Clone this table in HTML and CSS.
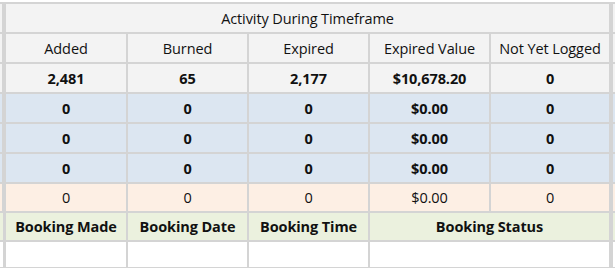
FILE: index.html
```html
<!DOCTYPE html>
<html>
<head>
<meta charset="utf-8">
<link rel="stylesheet" href="styles.css">
</head>
<body>
<div class="sheet">
  <div class="row gray">
    <div class="edge-l"></div>
    <div class="cell span5">Activity During Timeframe</div>
    <div class="edge-r"></div>
  </div>
  <div class="row gray">
    <div class="edge-l"></div>
    <div class="cell">Added</div>
    <div class="cell">Burned</div>
    <div class="cell">Expired</div>
    <div class="cell">Expired Value</div>
    <div class="cell">Not Yet Logged</div>
    <div class="edge-r"></div>
  </div>
  <div class="row gray bold">
    <div class="edge-l"></div>
    <div class="cell">2,481</div>
    <div class="cell">65</div>
    <div class="cell">2,177</div>
    <div class="cell">$10,678.20</div>
    <div class="cell">0</div>
    <div class="edge-r"></div>
  </div>
  <div class="row blue bold">
    <div class="edge-l"></div>
    <div class="cell">0</div>
    <div class="cell">0</div>
    <div class="cell">0</div>
    <div class="cell">$0.00</div>
    <div class="cell">0</div>
    <div class="edge-r"></div>
  </div>
  <div class="row blue bold">
    <div class="edge-l"></div>
    <div class="cell">0</div>
    <div class="cell">0</div>
    <div class="cell">0</div>
    <div class="cell">$0.00</div>
    <div class="cell">0</div>
    <div class="edge-r"></div>
  </div>
  <div class="row blue bold">
    <div class="edge-l"></div>
    <div class="cell">0</div>
    <div class="cell">0</div>
    <div class="cell">0</div>
    <div class="cell">$0.00</div>
    <div class="cell">0</div>
    <div class="edge-r"></div>
  </div>
  <div class="row peach">
    <div class="edge-l"></div>
    <div class="cell">0</div>
    <div class="cell">0</div>
    <div class="cell">0</div>
    <div class="cell">$0.00</div>
    <div class="cell">0</div>
    <div class="edge-r"></div>
  </div>
  <div class="row green bold thin-left">
    <div class="edge-l"></div>
    <div class="cell">Booking Made</div>
    <div class="cell">Booking Date</div>
    <div class="cell">Booking Time</div>
    <div class="cell span2">Booking Status</div>
    <div class="edge-r"></div>
  </div>
  <div class="row white thin-left">
    <div class="edge-l"></div>
    <div class="cell"></div>
    <div class="cell"></div>
    <div class="cell"></div>
    <div class="cell span2"></div>
    <div class="edge-r"></div>
  </div>
</div>
</body>
</html>
```

FILE: styles.css
```css
html, body {
  margin: 0;
  padding: 0;
  background: #ffffff;
}

body {
  font-family: "Open Sans", "Liberation Sans", sans-serif;
  font-size: 14.5px;
  color: #111111;
}

.sheet {
  margin-top: 2px;
  padding-top: 2px;
  padding-bottom: 1px;
  background: #d4d4d4;
  display: grid;
  grid-template-columns: 4px 120px 119px 119px 119px 118px 4px;
  column-gap: 2px;
  row-gap: 2px;
}

.row {
  display: contents;
}

.cell {
  height: 28px;
  display: flex;
  align-items: center;
  justify-content: center;
  white-space: nowrap;
  letter-spacing: -0.1px;
}

.edge-l {
  margin-right: 2px;
}

.edge-r {
  margin-left: 2px;
}

.span5 { grid-column: span 5; }
.span2 { grid-column: span 2; }

.bold { font-weight: 700; }

.gray .cell, .gray .edge-l, .gray .edge-r { background: #f3f3f3; }
.blue .cell, .blue .edge-l, .blue .edge-r { background: #dce6f1; }
.peach .cell, .peach .edge-l, .peach .edge-r { background: #fdefe4; }
.green .cell, .green .edge-l, .green .edge-r { background: #ebf1de; }
.white .cell, .white .edge-l, .white .edge-r { background: #ffffff; }

.peach .cell, .green .cell { height: 27px; }
.white .cell { height: 25px; }

.thin-left .edge-l { margin-right: 1px; }
```
